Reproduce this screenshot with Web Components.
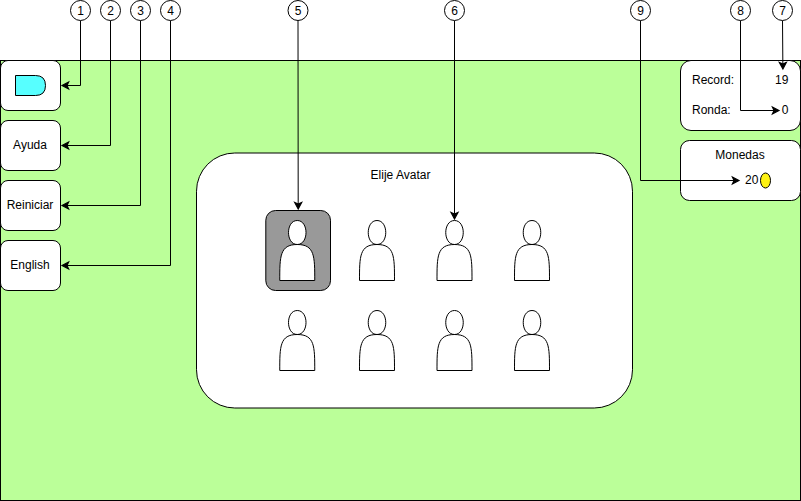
<!DOCTYPE html>
<html lang="es">
<head>
<meta charset="utf-8">
<title>Elije Avatar</title>
<style>
html, body { margin: 0; background: #fff; }
body { width: 801px; height: 501px; overflow: hidden; font: 12px/14px "Liberation Sans", Arial, Helvetica, sans-serif; color: #000; }
</style>
</head>
<body>
<game-mockup></game-mockup>
<script>
function define(name, html, setup) {
  const template = document.createElement('template');
  template.innerHTML = html;
  customElements.define(name, class extends HTMLElement {
    connectedCallback() {
      if (this.shadowRoot) return;
      this.attachShadow({ mode: 'open' }).append(template.content.cloneNode(true));
      if (setup) setup(this, this.shadowRoot);
    }
  });
}

/* Outlined rounded card; w, h, r and the optional dx, dy, fill describe the outline. */
define('outline-card', `
<style>
:host { display: grid; grid-template: minmax(0, 1fr) / minmax(0, 1fr); }
svg, .content { grid-area: 1 / 1; }
svg { display: block; overflow: visible; width: 100%; height: 100%; min-height: 0; }
rect { stroke: #000; }
.content { display: flex; flex-direction: column; align-items: center; min-width: 0; min-height: 0; }
:host([middle]) .content { justify-content: center; }
</style>
<svg aria-hidden="true"><rect/></svg>
<div class="content"><slot></slot></div>`, (el, root) => {
  const rect = root.querySelector('rect');
  const get = (key, fallback) => el.getAttribute(key) ?? fallback;
  rect.setAttribute('x', get('dx', '0.5'));
  rect.setAttribute('y', get('dy', '0.5'));
  rect.setAttribute('width', get('w'));
  rect.setAttribute('height', get('h'));
  rect.setAttribute('rx', get('r'));
  rect.setAttribute('fill', get('fill', '#fff'));
});

define('avatar-figure', `
<style>
:host { display: block; width: 36px; height: 61px; }
svg { display: block; overflow: visible; }
</style>
<svg width="36" height="61" viewBox="0 0 36 61" aria-hidden="true">
<path fill="#fff" stroke="#000" d="M.5 60.5C.5 36.5.5 24.5 18 24.5C6.33 24.5 6.33.5 18 .5C29.67.5 29.67 24.5 18 24.5C35.5 24.5 35.5 36.5 35.5 60.5Z"/>
</svg>`, (el, root) => {
  const shift = el.getAttribute('shift');
  if (shift) root.querySelector('path').setAttribute('transform', `translate(${shift} 0)`);
});

define('home-icon', `
<style>:host { display: block; } svg { display: block; }</style>
<svg width="31" height="21" aria-hidden="true"><path d="M.5.5H20.5Q30.5.5 30.5 10.5Q30.5 20.5 20.5 20.5H.5Z" fill="#57ffff" stroke="#000"/></svg>`);

define('gold-coin', `
<style>:host { display: block; } svg { display: block; }</style>
<svg width="11" height="17" aria-hidden="true"><ellipse cx="5.5" cy="8.5" rx="5" ry="7.5" fill="#fff314" stroke="#000"/></svg>`);

define('side-menu', `
<style>
:host { display: flex; flex-direction: column; gap: 9px; width: 61px; }
outline-card { height: 51px; }
span { padding: 0 1px 2px 0; }
</style>
<outline-card middle w="60" h="50" r="7.5"><home-icon></home-icon></outline-card>
<outline-card middle w="60" h="50" r="7.5"><span>Ayuda</span></outline-card>
<outline-card middle w="60" h="50" r="7.5"><span>Reiniciar</span></outline-card>
<outline-card middle w="60" h="50" r="7.5"><span>English</span></outline-card>`);

define('avatar-picker', `
<style>
:host { display: block; width: 437px; height: 257px; margin-top: 92px; }
outline-card.panel { height: 100%; }
h1 { font: inherit; margin: 16px 0 0; padding-right: 27px; }
.avatars { display: grid; grid-template-columns: 66px 64px 62px 66px; grid-template-rows: 81px 61px; column-gap: 14px; row-gap: 19px; justify-items: center; align-items: center; align-self: flex-start; margin: 28px 0 0 69px; }
outline-card.selected { width: 66px; height: 81px; }
</style>
<outline-card class="panel" w="436" h="255" r="38.25" dy="1">
<h1>Elije Avatar</h1>
<div class="avatars">
<outline-card class="selected" middle w="64.7" h="80" r="9.75" dx="0.8" fill="#999"><avatar-figure shift="-.75"></avatar-figure></outline-card>
<avatar-figure></avatar-figure><avatar-figure shift=".5"></avatar-figure><avatar-figure></avatar-figure>
<avatar-figure shift="-.75"></avatar-figure><avatar-figure></avatar-figure><avatar-figure shift=".5"></avatar-figure><avatar-figure></avatar-figure>
</div>
</outline-card>`);

define('score-board', `
<style>
:host { display: flex; flex-direction: column; gap: 9px; width: 121px; }
.score { height: 71px; }
.coins { height: 61px; }
.row { display: flex; justify-content: space-between; align-self: stretch; padding: 0 12.6px 0 12px; margin-bottom: 16px; }
.row:first-child { margin-top: 13px; }
.title { margin-top: 8px; padding-right: 1px; }
.total { display: flex; align-items: flex-start; margin-top: 10px; padding-left: 35px; }
.total span { width: 15px; margin-top: 1px; }
</style>
<outline-card class="score" w="120" h="70" r="10.5">
<div class="row"><span>Record:</span><span>19</span></div>
<div class="row"><span>Ronda:</span><span>0</span></div>
</outline-card>
<outline-card class="coins" w="120" h="60" r="9">
<span class="title">Monedas</span>
<div class="total"><span>20</span><gold-coin></gold-coin></div>
</outline-card>`);

define('game-screen', `
<style>
:host { display: flex; justify-content: space-between; align-items: flex-start; height: 441px; background: #bbff99; box-shadow: inset 0 0 0 1px #000; }
avatar-picker { margin-left: 87px; }
</style>
<side-menu></side-menu><avatar-picker></avatar-picker><score-board></score-board>`);

/* Numbered callouts and their connectors, drawn over the screen. */
define('callout-layer', `
<style>
:host { position: absolute; inset: 0; }
svg { display: block; }
text { font: 12px "Liberation Sans", Arial, sans-serif; text-anchor: middle; }
.line { fill: none; stroke: #000; }
.head { fill: #000; stroke: #000; stroke-width: 1.15; stroke-miterlimit: 10; }
circle { fill: #fff; stroke: #000; }
</style>
<svg width="801" height="501"></svg>`, (el, root) => {
  const marks = [
    [1, 80.5, [[80.5, 85.5], [61.62, 85.5]]],
    [2, 110.5, [[110.5, 145.5], [61.62, 145.5]]],
    [3, 140.5, [[140.5, 205.5], [61.62, 205.5]]],
    [4, 170.5, [[170.5, 265.5], [61.62, 265.5]]],
    [5, 298, [[298.2, 209.4]]],
    [6, 454.5, [[454.5, 219.4]]],
    [9, 640.5, [[640.5, 180.5], [739.4, 180.5]]],
    [8, 740.5, [[740.5, 110.5], [779.4, 110.5]]],
    [7, 782.5, [[782.9, 69.4]]]
  ];
  let out = '';
  for (const [label, x, points] of marks) {
    const route = [[x, 20.5], ...points];
    const [px, py] = route.at(-2), [tx, ty] = route.at(-1);
    const length = Math.hypot(tx - px, ty - py);
    const angle = Math.atan2(ty - py, tx - px) * 180 / Math.PI;
    const end = [tx - (tx - px) / length * 5.25, ty - (ty - py) / length * 5.25];
    out += `<path class="line" d="M${[...route.slice(0, -1), end].join('L')}"/>`;
    out += `<path class="head" transform="translate(${tx} ${ty}) rotate(${angle})" d="M-.4 0L-7 3.5L-5.4 0L-7-3.5Z"/>`;
    out += `<circle cx="${x}" cy="10.5" r="10"/><text x="${x}" y="14.5">${label}</text>`;
  }
  root.querySelector('svg').innerHTML = out;
});

define('game-mockup', `
<style>
:host { display: block; position: relative; width: 801px; height: 441px; padding-top: 60px; }
</style>
<game-screen></game-screen><callout-layer></callout-layer>`);
</script>
</body>
</html>
